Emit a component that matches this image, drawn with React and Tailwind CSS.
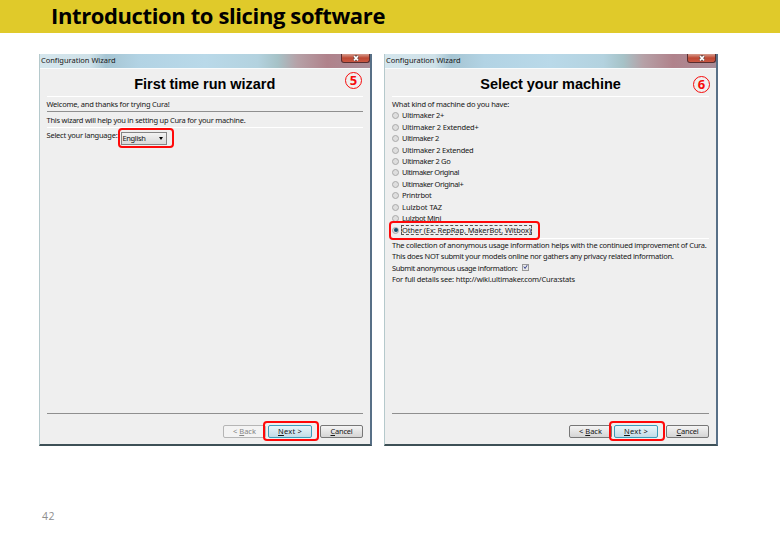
import React, { useLayoutEffect, useRef, useState } from "react";

// Text run tracked so that it fills the given width.
function Fit({ w, children, className = "" }) {
  const ref = useRef(null);
  const [gap, setGap] = useState(0);
  useLayoutEffect(() => {
    const el = ref.current;
    const natural = el.getBoundingClientRect().width;
    setGap((w - natural) / el.textContent.length);
  }, [w]);
  return (
    <span ref={ref} className={`inline-block whitespace-pre ${className}`} style={{ letterSpacing: gap }}>
      {children}
    </span>
  );
}

const small = "font-['Noto_Sans','Open_Sans',sans-serif] text-[7.5px] leading-[11px] text-[#161616]";

function Window({ title, titleWidth, badge, backDisabled, width, pad, badgePlace, children }) {
  return (
    <section className={`flex h-[392px] flex-col border-r-2 border-b-2 border-l border-r-[#587087] border-b-[#3d5056] border-l-[#b5c9cc] bg-[#efefef] ${width} ${small}`}>
      <header className="flex h-[14px] shrink-0 justify-between bg-[linear-gradient(90deg,#d5e6ed_0%,#cfe1e8_15%,#a6c5d3_20%,#b2d3e4_30%,#b9d9e9_50%,#b3d2df_66%,#a6c2c7_72%,#b6a1a7_78%,#b0828b_87%,#a98d98_100%)]">
        <div className="pt-px pl-px">
          <Fit w={74.5}>Configuration Wizard</Fit>
        </div>
        <div className="flex h-[9px] w-[29px] items-center justify-center rounded-b-[3px] border border-t-0 border-[#572c2e] bg-linear-to-b from-[#d59b8e] via-[#bd4732] to-[#cb5843]">
          <svg width="8" height="7" viewBox="0 0 8 7">
            <path d="M2 0.8 L6 5.5 M6 0.8 L2 5.5" stroke="#60403e" strokeWidth="3" />
            <path d="M2 1 L6 5.3 M6 1 L2 5.3" stroke="#fff" strokeWidth="1.7" />
          </svg>
        </div>
      </header>
      <div className={`flex min-h-0 flex-1 flex-col border-t border-t-[#f8fbfc] pr-[7px] ${pad}`}>
        <div className="relative flex h-[28px] shrink-0 items-center justify-center border-b border-white pt-[3px]">
          <Fit w={titleWidth} className="font-['Liberation_Sans',Arial,sans-serif] text-[14.5px] leading-[18px] font-bold text-black">{title}</Fit>
          <span className={`absolute flex size-[17px] items-center justify-center rounded-full border-[1.5px] border-[#f60b0b] font-['Open_Sans',sans-serif] text-[13px] leading-none font-bold text-[#f60b0b] ${badgePlace}`}>{badge}</span>
        </div>
        {children}
        <footer className="mt-auto flex h-[31px] shrink-0 items-start justify-end border-t border-[#8f8f8f] pt-[11px]">
          <Button w={23} className={backDisabled ? "w-[43px] border-[#b5b5b5] bg-[#f3f3f3] text-[#858585]" : "w-[43px] border-[#777] bg-linear-to-b from-[#f4f4f4] to-[#d5d5d5]"} pre="< " mnemonic="B" rest="ack" />
          <div className="relative ml-[2px]">
            <Button w={24} className="w-[44px] border-[#3d9bb8] bg-linear-to-b from-[#e9f5fa] to-[#c2dce7]" mnemonic="N" rest="ext >" />
            <div className="absolute -top-[4px] -left-[5px] h-[20px] w-[56px] rounded-[4px] border-[2.5px] border-[#ff0808]" />
          </div>
          <Button w={22} className="ml-[8px] w-[43px] border-[#777] bg-linear-to-b from-[#f4f4f4] to-[#d5d5d5]" mnemonic="C" rest="ancel" />
        </footer>
      </div>
    </section>
  );
}

function Button({ w, className, pre = "", mnemonic, rest }) {
  return (
    <div className={`flex h-[13px] shrink-0 items-center justify-center rounded-[2px] border ${className}`}>
      <Fit w={w}>{pre}<span className="underline underline-offset-1">{mnemonic}</span>{rest}</Fit>
    </div>
  );
}

function Radio({ on }) {
  return (
    <span className="flex size-[7px] shrink-0 items-center justify-center rounded-full border border-[#aaa] bg-[#dedede]">
      {on && <span className="size-[4px] rounded-full bg-[#134f6b]" />}
    </span>
  );
}

const machines = [
  ["Ultimaker 2+", 42],
  ["Ultimaker 2 Extended+", 76.5],
  ["Ultimaker 2", 37],
  ["Ultimaker 2 Extended", 71.5],
  ["Ultimaker 2 Go", 48.5],
  ["Ultimaker Original", 57],
  ["Ultimaker Original+", 61.5],
  ["Printrbot", 29.5],
  ["Lulzbot TAZ", 40],
  ["Lulzbot Mini", 39],
];

export default function App() {
  return (
    <div className="flex h-[540px] w-[780px] flex-col overflow-hidden bg-white">
      <h1 className="flex h-[33px] shrink-0 items-center bg-[#e0ca2a] pb-[2px] pl-[51px] font-['Open_Sans','Noto_Sans',sans-serif] text-[22px] leading-[31px] font-bold text-black">
        <Fit w={334}>Introduction to slicing software</Fit>
      </h1>
      <main className="flex gap-[12px] pt-[21px] pl-[39px]">
        <Window title="First time run wizard" titleWidth={141} badge="5" backDisabled width="w-[333px]" pad="pl-[6.5px]" badgePlace="top-[3px] right-[1px]">
          <div className="h-[15px] shrink-0 border-b border-[#8f8f8f] pt-[2px]">
            <Fit w={123}>Welcome, and thanks for trying Cura!</Fit>
          </div>
          <div className="h-[16px] shrink-0 border-b border-white pt-[3px]">
            <Fit w={199}>This wizard will help you in setting up Cura for your machine.</Fit>
          </div>
          <div className="flex pt-[2px]">
            <Fit w={71}>Select your language:</Fit>
            <div className="relative ml-[3px] mt-[2px] flex h-[13px] w-[46px] items-center justify-between border border-[#858585] bg-linear-to-b from-[#f2f2f2] to-[#d9d9d9] pr-[3px] pl-px">
              <Fit w={23}>English</Fit>
              <span className="border-x-[2.5px] border-t-[3px] border-x-transparent border-t-black" />
              <div className="absolute -top-[5px] -left-[4px] h-[20px] w-[56px] rounded-[4px] border-[2.5px] border-[#ff0808]" />
            </div>
          </div>
        </Window>
        <Window title="Select your machine" titleWidth={140.5} badge="6" width="w-[334px]" pad="pl-[7px]" badgePlace="top-[7px] right-[-1px]">
          <div className="h-[13px] shrink-0 pt-[2px]">
            <Fit w={117}>What kind of machine do you have:</Fit>
          </div>
          {machines.map(([name, w]) => (
            <div key={name} className="flex h-[11.45px] shrink-0 items-center gap-[3px]">
              <Radio />
              <Fit w={w}>{name}</Fit>
            </div>
          ))}
          <div className="relative flex h-[11.4px] shrink-0 items-center gap-[3px]">
            <Radio on />
            <span className="flex h-[8px] items-center outline-1 outline-dashed outline-[#555]">
              <Fit w={129}>Other (Ex: RepRap, MakerBot, Witbox)</Fit>
            </span>
            <div className="absolute -top-[3px] -left-[3px] h-[19px] w-[151px] rounded-[4px] border-[2.5px] border-[#ff0808]" />
          </div>
          <div className="mt-[2px] flex shrink-0 flex-col border-t border-white pt-px">
            <div className="h-[11.4px]"><Fit w={314.5}>The collection of anonymous usage information helps with the continued improvement of Cura.</Fit></div>
            <div className="h-[11.4px]"><Fit w={281.5}>This does NOT submit your models online nor gathers any privacy related information.</Fit></div>
            <div className="flex h-[11.4px] items-start gap-[4px]">
              <Fit w={125.5}>Submit anonymous usage information:</Fit>
              <span className="mt-px flex size-[7px] items-center justify-center border border-[#999] bg-[#e8e8e8]">
                <svg width="6" height="6" viewBox="0 0 6 6"><path d="M1 2.5 L2.5 4.8 L5 0.8" fill="none" stroke="#36428b" strokeWidth="1.2" /></svg>
              </span>
            </div>
            <div className="h-[11.4px]"><Fit w={183}>For full details see: http://wiki.ultimaker.com/Cura:stats</Fit></div>
          </div>
        </Window>
      </main>
      <div className="mt-auto mb-[17.5px] pl-[42px] font-['Open_Sans',sans-serif] text-[10.5px] leading-[14px] text-[#8e8e8e]">
        <Fit w={13}>42</Fit>
      </div>
    </div>
  );
}
